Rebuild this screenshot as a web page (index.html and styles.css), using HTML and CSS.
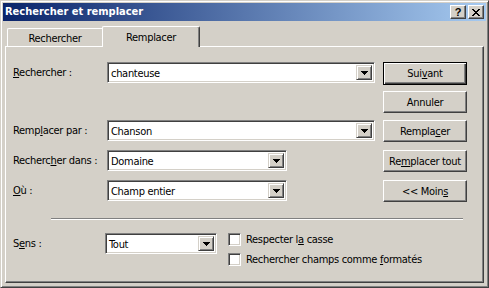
FILE: index.html
```html
<!DOCTYPE html>
<html lang="fr">
<head>
<meta charset="utf-8">
<title>Rechercher et remplacer</title>
<link rel="stylesheet" href="styles.css">
</head>
<body>
<div class="window">
  <div class="titlebar">
    <span class="title">Rechercher et remplacer</span>
    <div class="tbtns">
      <span class="tbtn help">?</span>
      <span class="tbtn close"><svg width="8" height="7" viewBox="0 0 8 7" shape-rendering="crispEdges"><path d="M0 0h2v1H0zM6 0h2v1H6zM1 1h2v1H1zM5 1h2v1H5zM2 2h4v1H2zM3 3h2v1H3zM2 4h4v1H2zM1 5h2v1H1zM5 5h2v1H5zM0 6h2v1H0zM6 6h2v1H6z" fill="#000"/></svg></span>
    </div>
  </div>
  <div class="client">
    <div class="tabs">
      <div class="tab">Rechercher</div>
      <div class="tab active">Remplacer</div>
    </div>
    <div class="panel">
      <div class="form">
        <div class="fields">
          <div class="row r1">
            <span class="lbl"><u>R</u>echercher :</span>
            <div class="combo wide"><span class="val">chanteuse</span><span class="arrow"><svg width="7" height="4" viewBox="0 0 7 4" shape-rendering="crispEdges"><path d="M0 0h7v1H0zM1 1h5v1H1zM2 2h3v1H2zM3 3h1v1H3z" fill="#000"/></svg></span></div>
          </div>
          <div class="row r3">
            <span class="lbl">Remp<u>l</u>acer par :</span>
            <div class="combo wide"><span class="val">Chanson</span><span class="arrow"><svg width="7" height="4" viewBox="0 0 7 4" shape-rendering="crispEdges"><path d="M0 0h7v1H0zM1 1h5v1H1zM2 2h3v1H2zM3 3h1v1H3z" fill="#000"/></svg></span></div>
          </div>
          <div class="row r4">
            <span class="lbl">Recherc<u>h</u>er dans :</span>
            <div class="combo mid"><span class="val">Domaine</span><span class="arrow"><svg width="7" height="4" viewBox="0 0 7 4" shape-rendering="crispEdges"><path d="M0 0h7v1H0zM1 1h5v1H1zM2 2h3v1H2zM3 3h1v1H3z" fill="#000"/></svg></span></div>
          </div>
          <div class="row r5">
            <span class="lbl"><u>O</u>ù :</span>
            <div class="combo mid"><span class="val">Champ entier</span><span class="arrow"><svg width="7" height="4" viewBox="0 0 7 4" shape-rendering="crispEdges"><path d="M0 0h7v1H0zM1 1h5v1H1zM2 2h3v1H2zM3 3h1v1H3z" fill="#000"/></svg></span></div>
          </div>
        </div>
        <div class="buttons">
          <button class="btn default">Sui<u>v</u>ant</button>
          <button class="btn">Annuler</button>
          <button class="btn">Rempla<u>c</u>er</button>
          <button class="btn">Re<u>m</u>placer tout</button>
          <button class="btn">&lt;&lt; Moin<u>s</u></button>
        </div>
      </div>
      <div class="sep"></div>
      <div class="opts">
        <span class="lbl sens">S<u>e</u>ns :</span>
        <div class="combo small"><span class="val">Tout</span><span class="arrow"><svg width="7" height="4" viewBox="0 0 7 4" shape-rendering="crispEdges"><path d="M0 0h7v1H0zM1 1h5v1H1zM2 2h3v1H2zM3 3h1v1H3z" fill="#000"/></svg></span></div>
        <div class="checks">
          <div class="check"><span class="box"></span><span>Respecter l<u>a</u> casse</span></div>
          <div class="check"><span class="box"></span><span>Rechercher champs comme <u>f</u>ormatés</span></div>
        </div>
      </div>
    </div>
  </div>
</div>
</body>
</html>
```
FILE: styles.css
```css
* { box-sizing: border-box; }
html, body { margin: 0; padding: 0; }
body {
  width: 489px;
  height: 288px;
  background: #d4d0c8;
  font-family: "DejaVu Sans Condensed", "Liberation Sans", Arial, sans-serif;
  font-size: 11px;
  letter-spacing: -0.3px;
  color: #000;
  overflow: hidden;
}
u { text-decoration: underline; text-underline-offset: 1px; }

.window {
  width: 489px;
  height: 288px;
  border: 1px solid;
  border-color: #d4d0c8 #404040 #404040 #d4d0c8;
  box-shadow: inset 1px 1px #fff, inset -1px -1px #808080;
  padding: 2px;
  display: flex;
  flex-direction: column;
  background: #d4d0c8;
}

.titlebar {
  height: 18px;
  flex: none;
  background: linear-gradient(to right, #0a246a, #a6caf0);
  display: flex;
  align-items: center;
  justify-content: space-between;
  padding: 0 2px 0 2px;
}
.title {
  color: #fff;
  font-weight: bold;
  font-size: 11px;
  letter-spacing: 0;
  line-height: 18px;
}
.tbtns { display: flex; gap: 2px; }
.tbtn {
  width: 16px;
  height: 14px;
  background: #d4d0c8;
  border: 1px solid;
  border-color: #fff #404040 #404040 #fff;
  box-shadow: inset -1px -1px #808080;
  display: flex;
  align-items: center;
  justify-content: center;
  font-family: "Liberation Sans", Arial, sans-serif;
  font-weight: bold;
  font-size: 11px;
  letter-spacing: 0;
  line-height: 12px;
}
.tbtn.close svg { display: block; margin-right: 1px; }

.client {
  flex: 1;
  display: flex;
  flex-direction: column;
  padding: 4px 2px 2px 2px;
}

.tabs {
  height: 21px;
  display: flex;
  align-items: flex-end;
  padding-left: 2px;
  flex: none;
}
.tab {
  width: 95px;
  height: 18px;
  border-left: 1px solid #fff;
  border-top: 1px solid #fff;
  border-radius: 2px 0 0 0;
  display: flex;
  align-items: center;
  justify-content: center;
  padding-top: 1px;
}
.tab.active {
  width: 98px;
  height: 21px;
  margin-bottom: -1px;
  position: relative;
  z-index: 1;
  background: #d4d0c8;
  border-right: 1px solid #404040;
  border-radius: 2px 2px 0 0;
  box-shadow: inset -1px 0 #808080;
  padding-top: 0;
}

.panel {
  flex: 1;
  border: 1px solid;
  border-color: #fff #404040 #404040 #fff;
  box-shadow: inset -1px -1px #808080;
  padding: 15px 0 0 7px;
}

.form {
  display: flex;
  align-items: flex-start;
  gap: 8px;
}
.fields {
  width: 362px;
  flex: none;
  display: flex;
  flex-direction: column;
}
.row {
  display: flex;
  align-items: center;
  height: 21px;
}
.row.r3 { margin-top: 37px; }
.row.r4 { margin-top: 9px; }
.row.r5 { margin-top: 9px; }
.lbl {
  width: 94px;
  flex: none;
  line-height: 21px;
  height: 21px;
  white-space: nowrap;
}

.combo {
  flex: none;
  height: 21px;
  background: #fff;
  border: 1px solid;
  border-color: #808080 #fff #fff #808080;
  box-shadow: inset 1px 1px #404040, inset -1px -1px #d4d0c8;
  padding: 2px;
  display: flex;
  align-items: stretch;
}
.combo.wide { width: 268px; }
.combo.mid { width: 180px; }
.combo.small { width: 112px; }
.combo .val {
  flex: 1;
  padding-left: 1px;
  line-height: 17px;
  white-space: nowrap;
}
.arrow {
  width: 16px;
  background: #d4d0c8;
  border: 1px solid;
  border-color: #d4d0c8 #404040 #404040 #d4d0c8;
  box-shadow: inset 1px 1px #fff, inset -1px -1px #808080;
  display: flex;
  align-items: center;
  justify-content: center;
}
.arrow svg { display: block; }

.buttons {
  width: 84px;
  flex: none;
  display: flex;
  flex-direction: column;
}
.btn {
  width: 84px;
  height: 22px;
  font: inherit;
  letter-spacing: inherit;
  color: #000;
  background: #d4d0c8;
  border: 1px solid;
  border-color: #fff #404040 #404040 #fff;
  box-shadow: inset -1px -1px #808080;
  padding: 0;
  margin: 7px 0 0 0;
  text-align: center;
  line-height: 19px;
}
.btn:nth-child(2) { margin-top: 6px; }
.btn:nth-child(4), .btn:nth-child(5) { margin-top: 8px; }
.btn.default {
  margin-top: 0;
  height: 23px;
  border: 1px solid #000;
  box-shadow: inset 1px 1px #fff, inset -1px -1px #404040, inset -2px -2px #808080;
}

.sep {
  margin: 16px 0 0 38px;
  width: 412px;
  height: 2px;
  border-top: 1px solid #808080;
  border-bottom: 1px solid #fff;
}

.opts {
  margin-top: 13px;
  display: flex;
  align-items: flex-start;
}
.lbl.sens { width: 92px; }
.checks {
  margin-left: 11px;
  display: flex;
  flex-direction: column;
  gap: 7px;
}
.check {
  display: flex;
  align-items: center;
  gap: 5px;
  height: 13px;
  white-space: nowrap;
}
.box {
  width: 13px;
  height: 13px;
  background: #fff;
  border: 1px solid;
  border-color: #808080 #fff #fff #808080;
  box-shadow: inset 1px 1px #404040, inset -1px -1px #d4d0c8;
  flex: none;
}
```
